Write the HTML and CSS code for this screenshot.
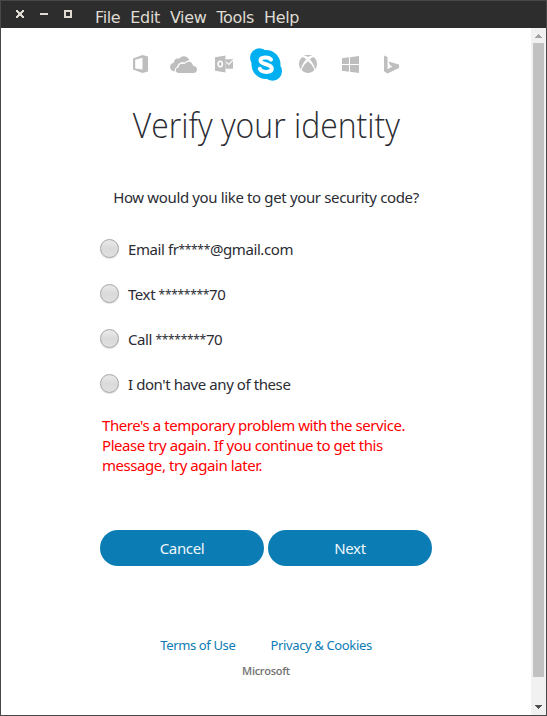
FILE: index.html
```html
<!DOCTYPE html>
<html lang="en">
<head>
<meta charset="utf-8">
<title>Verify your identity</title>
<link rel="stylesheet" href="styles.css">
</head>
<body>
<div class="window">
  <header class="titlebar">
    <svg class="controls" width="64" height="12" viewBox="0 0 64 12" shape-rendering="crispEdges">
      <path d="M1 2h2v1h1v1h2v-1h1v-1h2v2h-1v1h-1v2h1v1h1v2h-2v-1h-1v-1h-2v1h-1v1h-2v-2h1v-1h1v-2h-1v-1h-1z" fill="#dfdbd2"/>
      <path d="M25 5h8v2h-8z" fill="#dfdbd2"/>
      <path d="M50 3h6v6h-6z" fill="none" stroke="#dfdbd2" stroke-width="2"/>
    </svg>
    <nav class="menu"><span>File</span><span>Edit</span><span>View</span><span>Tools</span><span>Help</span></nav>
  </header>
  <div class="viewport">
    <main class="page">
      <div class="brands">
        <svg width="15" height="18" viewBox="0 0 15 18"><path fill="#bebebe" fill-rule="evenodd" d="M0 3.5 9.5 0 15 1.6v14.8L9.500 18 0 14.6zM2.200 4.800v8.600L9.500 14.500V2.800z"/></svg>
        <svg class="cloud" width="27" height="17" viewBox="0 0 27 17"><path fill="#bebebe" d="M5 15.500C1.800 15.200 0 13.500 0 11c0-2.200 1.600-3.900 3.700-4.200C4 3.700 6.300 2.200 9 2.700 10.300.9 12.200 0 14.200.2c2.500.2 4.600 1.900 5.300 4.300-2 0-3.500.6-4.800 2-3.300-1.100-7.300.9-7.400 4.400C5.200 11.600 4.300 13.700 5 15.500z"/><path fill="#bebebe" d="M9 17c-2.200 0-3.500-1.200-3.500-2.900 0-1.600 1.200-2.700 2.700-2.900C8.200 8.500 11 6.400 14.500 7.800 17.500 3.700 22.700 5.500 23 9.800c2.600.3 4 1.700 4 3.700 0 2-1.400 3.500-3.500 3.500z"/><path fill="none" stroke="#fff" stroke-width=".9" d="M5.400 15.500C4.900 13.300 6 11.400 8.200 11.200 8.200 8.500 11 6.400 14.500 7.800c1.300-1.700 3-2.600 5-2.600"/></svg>
        <svg class="outlook" width="18" height="18" viewBox="0 0 19 18"><path fill="#bebebe" d="M0 2 11 0v18L0 16z"/><path fill="#bebebe" d="M11 4h8v10h-8z"/><path fill="none" stroke="#fff" stroke-width="1.100" d="m12 7 2.500 2.500L19 5"/><ellipse cx="5.500" cy="9" rx="2.200" ry="3" fill="none" stroke="#fff" stroke-width="1.600"/></svg>
        <svg class="skype" width="32" height="33" viewBox="0 0 32 33"><g fill="#00aff0"><circle cx="9.500" cy="9.800" r="9.500"/><circle cx="22.500" cy="23.200" r="9.500"/><circle cx="16" cy="16.500" r="14.500"/></g><path fill="none" stroke="#fff" stroke-width="4" stroke-linecap="round" d="M21 11.700C19 8.700 10.500 8.500 10.500 12.500c0 4.600 11.300 2.900 11.300 8 0 4.500-10 4.400-12 .4"/></svg>
        <svg class="xbox" width="18" height="18" viewBox="0 0 18 18"><g fill="#bebebe"><path d="M4 1.400C7 .5 8 1.300 9 2c1-.7 2-1.500 5-.6-1.500-1.200-3.200-1.500-5-1.500s-3.500.3-5 1.500z"/><path d="M3.100 2.300C4.500 2 6.300 3.400 7.200 4.300 4.500 7.400 2 11.600 2 14.600-.7 11.500-.8 5.500 3.100 2.300z"/><path d="M14.900 2.300c-1.400-.3-3.200 1.100-4.100 2 2.700 3.100 5.200 7.300 5.200 10.300 2.700-3.100 2.800-9.100-1.100-12.300z"/><path d="M9 6.200c3.100 2.500 6.800 7.100 6 9-3.100 3.600-8.900 3.600-12 0-.8-1.900 2.900-6.500 6-9z"/></g></svg>
        <svg class="windows" width="17" height="17" viewBox="0 0 17 17"><path fill="#bebebe" d="M0 2.300 7 1.300V8H0zM8 1.200 17 0v8H8zM0 9h7v6.700l-7-1zM8 9h9v8l-9-1.200z"/></svg>
        <svg class="bing" width="15" height="19" viewBox="0 0 16 19"><path fill="#bebebe" d="m0 0 3.800 1.400v13.100l5.200-3-2.500-1.200-1.600-4L16 9.500v3.800L3.800 19 0 16.700z"/></svg>
      </div>
      <h1>Verify your identity</h1>
      <p class="question">How would you like to get your security code?</p>
      <form class="form">
        <label class="option"><input type="radio" name="proof"><span>Email fr<b>*****</b>@gmail.com</span></label>
        <label class="option"><input type="radio" name="proof"><span>Text <b>********</b>70</span></label>
        <label class="option"><input type="radio" name="proof"><span>Call <b>********</b>70</span></label>
        <label class="option"><input type="radio" name="proof"><span>I don't have any of these</span></label>
        <p class="error">There's a temporary problem with the service.<br>Please try again. If you continue to get this<br>message, try again later.</p>
        <div class="actions"><button type="button">Cancel</button><button type="button">Next</button></div>
      </form>
      <footer>
        <div class="links"><a>Terms of Use</a><a>Privacy &amp; Cookies</a></div>
        <div class="microsoft">Microsoft</div>
      </footer>
    </main>
    <div class="scrollbar">
      <svg width="15" height="15" viewBox="0 0 15 15" shape-rendering="crispEdges"><path fill="#a3a3a3" d="M7 6h1v1h1v1h1v1h1v1H4V9h1V8h1V7h1z"/></svg>
      <div class="thumb"></div>
      <svg class="down" width="15" height="15" viewBox="0 0 15 15" shape-rendering="crispEdges"><path fill="#505050" d="M4 5h7v1h-1v1H9v1H8v1H7V8H6V7H5V6H4z"/></svg>
    </div>
  </div>
</div>
</body>
</html>
```
FILE: styles.css
```css
* { box-sizing: border-box; }
body { margin: 0; }
.window {
  width: 547px;
  height: 716px;
  border: 1px solid #484848;
  background: #fff;
  color: #2b2c33;
  font-family: "Noto Sans", "Open Sans", sans-serif;
  overflow: hidden;
}
.titlebar {
  height: 27px;
  background: #2d2d2d;
  display: flex;
  align-items: flex-start;
}
.controls { margin: 7px 0 0 14px; }
.menu {
  display: flex;
  gap: 10px;
  margin: 7px 0 0 16px;
  color: #dfdbd2;
  font: 16px/20px "DejaVu Sans", sans-serif;
  letter-spacing: -0.36px;
}
.viewport { display: flex; height: 687px; }
.page { width: 530px; display: flex; flex-direction: column; align-items: center; }
.brands {
  display: flex;
  align-items: center;
  width: 266px;
  height: 34px;
  margin-top: 19px;
}
.cloud { margin-left: 22px; }
.outlook { margin-left: 18px; }
.skype, .xbox { margin-left: 17px; }
.windows, .bing { margin-left: 25px; }
h1 {
  margin: 17px 0 0;
  font: 300 35px/54px "Open Sans", "Noto Sans", sans-serif;
  white-space: nowrap;
  transform: scaleX(.913);
}
.question { margin: 35px 0 0; font-size: 15px; line-height: 20px; letter-spacing: -0.36px; white-space: nowrap; }
.form { width: 332px; margin: 29px 0 0; font-size: 15px; letter-spacing: -0.42px; }
.option {
  display: flex;
  align-items: center;
  height: 24px;
  margin-bottom: 21px;
  white-space: nowrap;
}
.option span { padding-top: 1px; line-height: 20px; }
.option b {
  position: relative;
  top: -1px;
  font-size: 12px;
  font-weight: 400;
  line-height: 1;
  letter-spacing: -0.3px;
}
input {
  appearance: none;
  width: 19px;
  height: 19px;
  margin: 0 9px 0 0;
  border: 1px solid #a6a6a6;
  border-radius: 50%;
  background: linear-gradient(#e6e6e6 0 15%, #dadada 50%, #e0e0e0);
  box-shadow: 0 1px 1px #ddd;
}
.error { margin: -1px 0 0 2px; line-height: 20px; letter-spacing: -0.44px; color: #f00; white-space: nowrap; }
.actions { display: flex; gap: 4px; margin-top: 55px; }
button {
  width: 164px;
  height: 36px;
  padding: 0 0 1px;
  border: 0;
  border-radius: 18px;
  background: #0c7cb5;
  color: #f0f7fa;
  font: 15px "Noto Sans", sans-serif;
  letter-spacing: -0.35px;
}
footer { margin-top: 70px; text-align: center; }
.links { display: flex; gap: 35px; color: #0c7cb5; font-size: 13px; line-height: 18px; letter-spacing: -0.36px; white-space: nowrap; }
.microsoft { margin-top: 9px; color: #737373; font: 600 11px/16px "Open Sans", sans-serif; letter-spacing: -0.3px; }
.scrollbar { width: 15px; height: 687px; background: #f1f1f1; display: flex; flex-direction: column; }
.thumb { width: 11px; height: 634px; margin: 0 2px; background: #c1c1c1; }
.down { margin-top: auto; }
```
